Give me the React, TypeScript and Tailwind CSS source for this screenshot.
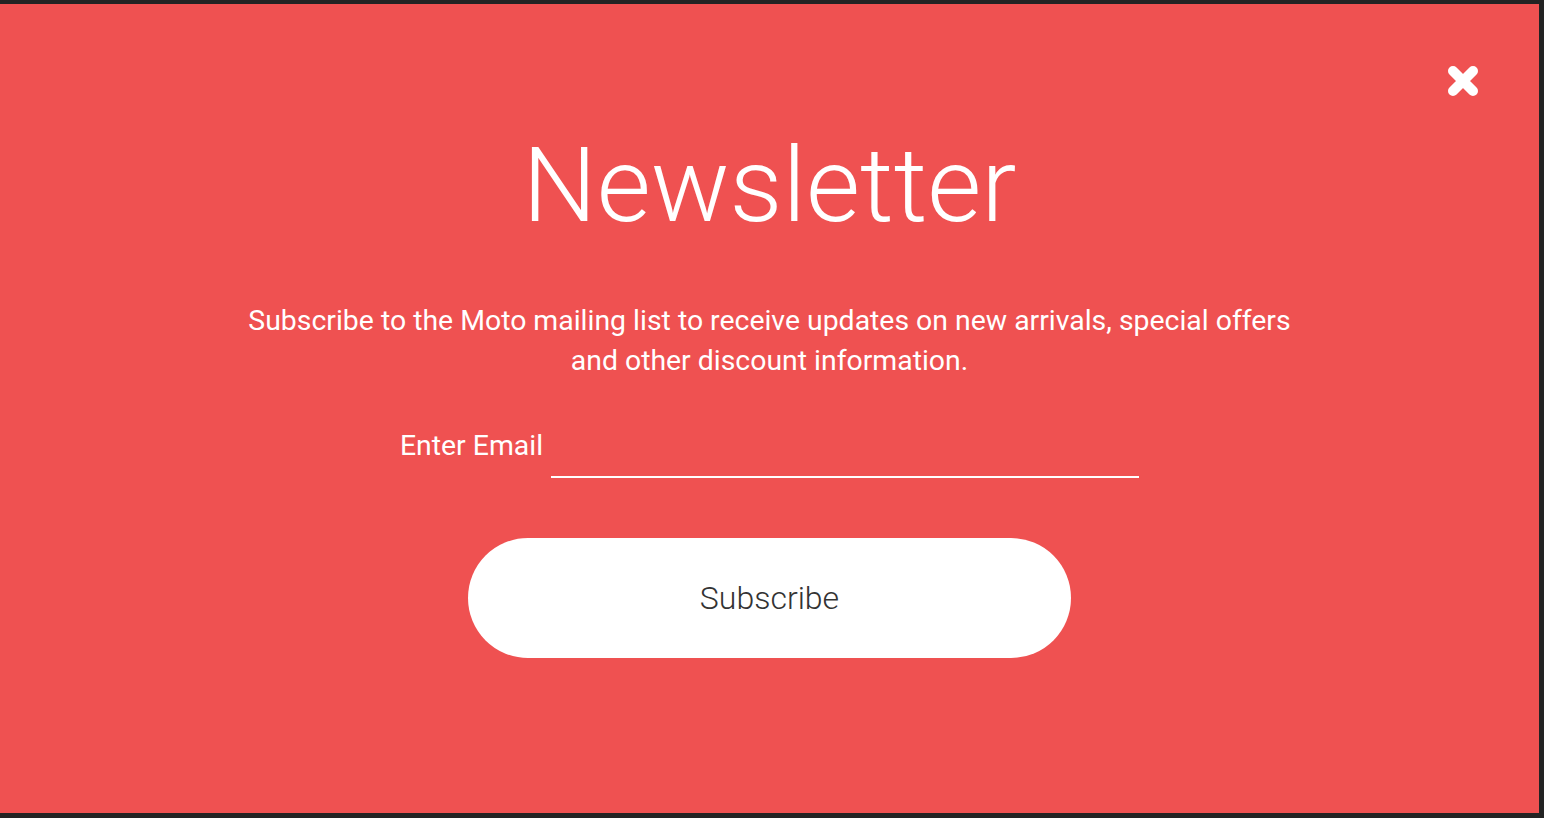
export default function App() {
  return (
    <div className="h-[818px] w-full overflow-hidden bg-[#232323] pt-[4px]" style={{ fontFamily: 'Roboto, "Noto Sans", sans-serif' }}>
      <div className="relative flex h-[809px] w-[1539px] flex-col items-center bg-[#EF5151] text-white">
        {/* Close */}
        <button className="absolute right-[60px] top-[61px] h-[32px] w-[32px]">
          <svg viewBox="0 0 32 32" width="32" height="32">
            <path d="M6 6 L26 26 M26 6 L6 26" stroke="#fff" strokeWidth="10" strokeLinecap="round" />
          </svg>
        </button>

        <h1 className="mt-[129px] text-[104.5px] font-light leading-[106px]">Newsletter</h1>

        <p className="mt-[62px] w-[1060px] text-center text-[28.4px] leading-[40px]">
          Subscribe to the Moto mailing list to receive updates on new arrivals, special offers and other discount information.
        </p>

        <div className="mt-[45px] flex items-start gap-[8px]">
          <label className="text-[28.4px] leading-[40px]">Enter Email</label>
          <input
            type="email"
            className="h-[52px] w-[588px] border-b-2 border-white bg-transparent text-[26px] text-white outline-none"
          />
        </div>

        <button className="mt-[60px] flex h-[120px] w-[603px] items-center justify-center rounded-full bg-white text-[32px] font-light leading-none text-[#333]">
          Subscribe
        </button>
      </div>
    </div>
  );
}
